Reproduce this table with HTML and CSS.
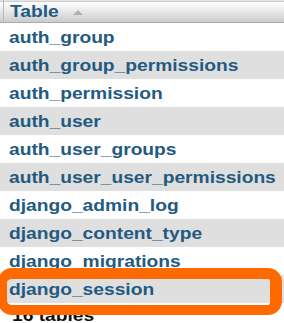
FILE: index.html
```html
<!DOCTYPE html>
<html>
<head>
<meta charset="utf-8">
<link rel="stylesheet" href="styles.css">
</head>
<body>
<div class="panel">
  <table class="tbl">
    <thead>
      <tr>
        <th class="edge"></th>
        <th class="head"><span class="wide">Table</span><span class="sort"></span></th>
      </tr>
    </thead>
    <tbody>
      <tr><td class="edge"></td><td><span class="wide">auth_group</span></td></tr>
      <tr class="alt"><td class="edge"></td><td><span class="wide">auth_group_permissions</span></td></tr>
      <tr><td class="edge"></td><td><span class="wide">auth_permission</span></td></tr>
      <tr class="alt"><td class="edge"></td><td><span class="wide">auth_user</span></td></tr>
      <tr><td class="edge"></td><td><span class="wide">auth_user_groups</span></td></tr>
      <tr class="alt"><td class="edge"></td><td><span class="wide">auth_user_user_permissions</span></td></tr>
      <tr><td class="edge"></td><td><span class="wide">django_admin_log</span></td></tr>
      <tr class="alt"><td class="edge"></td><td><span class="wide">django_content_type</span></td></tr>
      <tr><td class="edge"></td><td><span class="wide">django_migrations</span></td></tr>
      <tr class="alt"><td class="edge"></td><td><span class="wide">django_session</span></td></tr>
    </tbody>
    <tfoot>
      <tr><td class="edge"></td><td class="foot"><span class="wide">16 tables</span></td></tr>
    </tfoot>
  </table>
  <div class="highlight"></div>
</div>
</body>
</html>
```
FILE: styles.css
```css
html, body {
  margin: 0;
  padding: 0;
  background: #fff;
  overflow: hidden;
}
.panel {
  position: relative;
  width: 284px;
  height: 323px;
  overflow: hidden;
  font-family: "Liberation Sans", Arial, sans-serif;
  font-weight: bold;
  font-size: 16px;
}
.tbl {
  border-collapse: collapse;
  width: 284px;
}
.tbl td, .tbl th {
  padding: 0;
  text-align: left;
  white-space: nowrap;
}
.tbl .edge {
  width: 3px;
}
.tbl tbody td:not(.edge) {
  padding: 2px 0 0 5px;
  height: 26px;
  line-height: 26px;
  color: #235a81;
}
.tbl thead tr {
  background: linear-gradient(#ffffff, #cccccc);
  border-top: 1px solid #e4e4e4;
  border-bottom: 1px solid #aaaaaa;
}
.tbl thead .edge {
  border-right: 1px solid #b8b8b8;
}
.tbl th.head {
  height: 21px;
  line-height: 21px;
  padding-left: 6px;
  color: #235a81;
}
.tbl tbody tr {
  background: #ffffff;
}
.tbl tbody tr.alt {
  background: #dfdfdf;
}
.wide {
  display: inline-block;
  transform: scaleX(1.2);
  transform-origin: left center;
}
.sort {
  display: inline-block;
  width: 0;
  height: 0;
  margin-left: 22px;
  vertical-align: 2px;
  border-left: 5px solid transparent;
  border-right: 5px solid transparent;
  border-bottom: 5px solid #b0b0b0;
}
.tbl td.foot {
  color: #111;
  height: 22px;
  line-height: 22px;
  padding: 2px 0 0 8px;
}
.highlight {
  position: absolute;
  left: -2px;
  top: 268px;
  width: 284px;
  height: 47px;
  box-sizing: border-box;
  border-style: solid;
  border-color: #ff6a00;
  border-width: 11px 12px 10px 9px;
  border-radius: 14px;
}
```
